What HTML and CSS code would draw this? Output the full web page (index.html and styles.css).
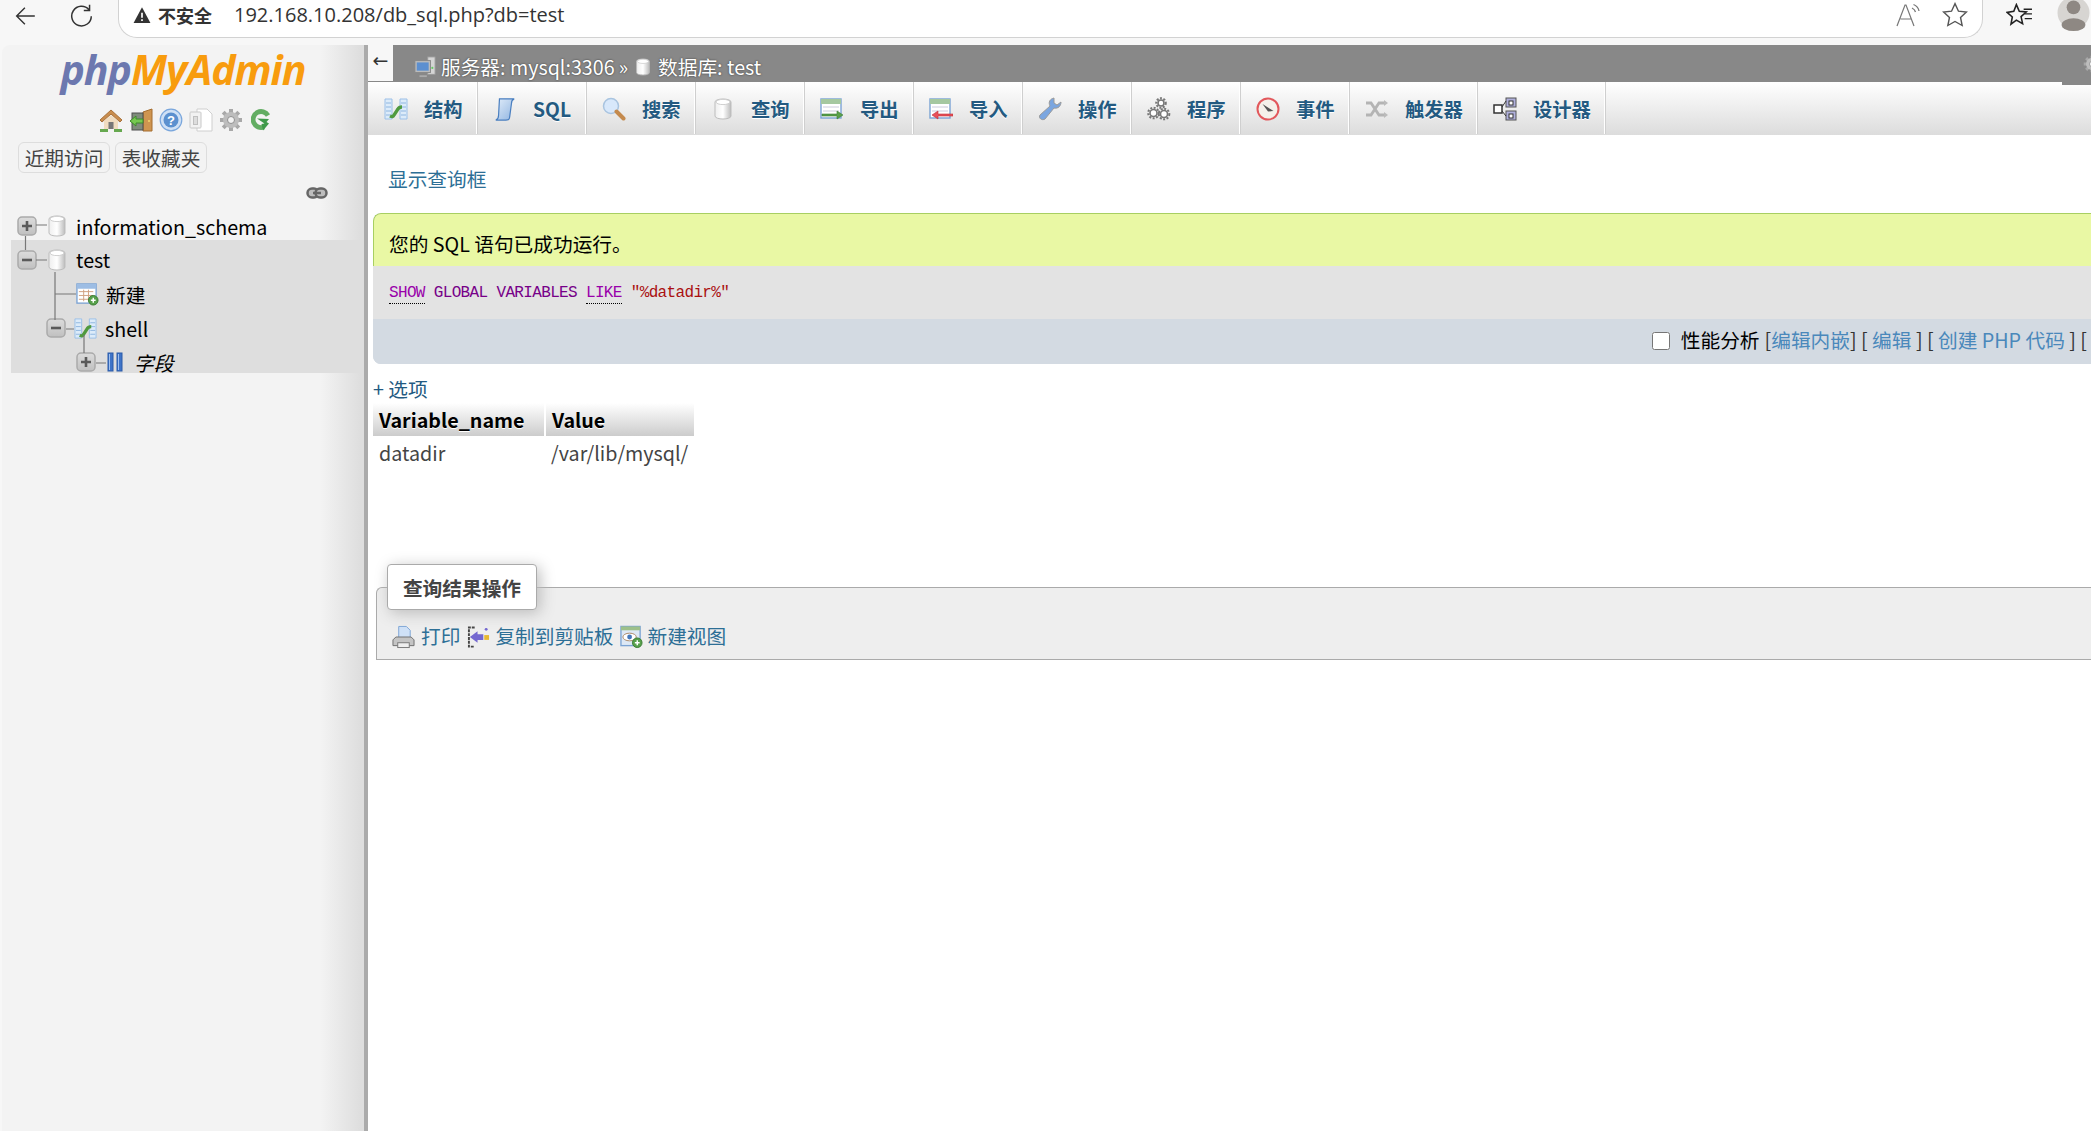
FILE: index.html
```html
<!DOCTYPE html>
<html lang="zh">
<head>
<meta charset="utf-8">
<title>phpMyAdmin</title>
<link rel="stylesheet" href="styles.css">
</head>
<body>
<svg class="defs" width="0" height="0" aria-hidden="true">
  <defs>
    <linearGradient id="dbg" x1="0" x2="1" y1="0" y2="0"><stop offset="0" stop-color="#eee"/><stop offset=".5" stop-color="#fff"/><stop offset="1" stop-color="#bcbcbc"/></linearGradient>
    <linearGradient id="blueg" x1="0" x2="1" y1="0" y2="1"><stop offset="0" stop-color="#e2edfa"/><stop offset="1" stop-color="#8fb4e0"/></linearGradient>
    <linearGradient id="boxg" x1="0" x2="0" y1="0" y2="1"><stop offset="0" stop-color="#dcdcdc"/><stop offset="1" stop-color="#c0c0c0"/></linearGradient>
    <symbol id="i-db" viewBox="0 0 20 24"><path d="M2 5c0-4 16-4 16 0v14c0 4-16 4-16 0z" fill="url(#dbg)" stroke="#bdbdbd"/><ellipse cx="10" cy="5" rx="7" ry="2.600" fill="#fff" stroke="#d0d0d0"/></symbol>
    <symbol id="i-plus" viewBox="0 0 20 20"><rect x="1" y="1" width="18" height="18" rx="4" fill="url(#boxg)" stroke="#aaa" stroke-width="1.500"/><path d="M5 10h10M10 5v10" stroke="#5a5a5a" stroke-width="2.600"/></symbol>
    <symbol id="i-minus" viewBox="0 0 20 20"><rect x="1" y="1" width="18" height="18" rx="4" fill="url(#boxg)" stroke="#aaa" stroke-width="1.500"/><path d="M5 10h10" stroke="#5a5a5a" stroke-width="2.600"/></symbol>
    <symbol id="i-table-new" viewBox="0 0 24 24"><rect x="1" y="1" width="20" height="20" fill="#fff" stroke="#7ba3d4" stroke-width="1.400"/><rect x="1" y="1" width="20" height="5" fill="#9dbde4"/><path d="M3 9h15M3 13h15M3 17h12M8 7v12M13 7v12" stroke="#d0a080" stroke-width="1"/><circle cx="18" cy="18" r="5" fill="#57a04b" stroke="#3b7c34"/><path d="M15.500 18h5M18 15.500v5" stroke="#fff" stroke-width="1.500"/></symbol>
    <symbol id="i-struct" viewBox="0 0 24 24"><path d="M1 2h7v20H1zM16 2h7v20h-7z" fill="#dcebf9" stroke="#9cc0e8"/><path d="M2 6h5M2 10h5M2 14h5M2 18h5M17 6h5M17 10h5M17 14h5M17 18h5" stroke="#8fb6e0"/><path d="M6 19c2 1 3 1 4-1l4-6c1-2 2-2 4-2" fill="none" stroke="#4f9a3f" stroke-width="3.400"/></symbol>
    <symbol id="i-cols" viewBox="0 0 16 20"><rect x="1" y="1" width="5" height="18" fill="#3f74c8" stroke="#2a5aa8"/><rect x="10" y="1" width="5" height="18" fill="#3f74c8" stroke="#2a5aa8"/><path d="M2.500 2v16M11.500 2v16" stroke="#9fc0f0"/></symbol>
    <symbol id="i-home" viewBox="0 0 24 24"><path d="M12 2L1 12l2 2 9-8 9 8 2-2z" fill="#c98d4e" stroke="#a8713a"/><path d="M5 13l7-6 7 6v8H5z" fill="#f0dcc0"/><rect x="9.500" y="14" width="5" height="7" fill="#777"/><path d="M1 22.500h8M15 22.500h8" stroke="#66a84f" stroke-width="2.800"/></symbol>
    <symbol id="i-exit" viewBox="0 0 24 24"><path d="M14 4l9-3v22h-9z" fill="#cf9550" stroke="#a56d2e"/><circle cx="20" cy="13" r="1" fill="#f5d76e"/><rect x="3" y="5" width="11" height="17" fill="#7f8c7c" stroke="#4f4f4f"/><path d="M1 13l6-5v3h7v4H7v3z" fill="#75c850" stroke="#3e8a2c"/></symbol>
    <symbol id="i-help" viewBox="0 0 24 24"><circle cx="12" cy="12" r="10.800" fill="#cfe0f5" stroke="#79a6dc" stroke-width="1.200"/><circle cx="12" cy="12" r="7.500" fill="#5b90cf"/><text x="12" y="16.500" text-anchor="middle" class="help-q">?</text></symbol>
    <symbol id="i-doc" viewBox="0 0 24 24"><path d="M8 1h10l5 5v17H8z" fill="#fff" stroke="#cfcfcf"/><path d="M1 5c0-1 1-1 1-1h9c1 0 1 1 1 1v14c0 1-1 1-1 1H2c-1 0-1-1-1-1z" fill="#f2f2f2" stroke="#c8c8c8"/><rect x="4.500" y="8.500" width="4" height="8" fill="#ddd" stroke="#c0c0c0"/></symbol>
    <symbol id="i-gear" viewBox="0 0 24 24"><g stroke="#a8a8a8" stroke-width="4"><path d="M12 1v22M1 12h22M4.200 4.200l15.600 15.600M19.800 4.200L4.200 19.800"/></g><circle cx="12" cy="12" r="8" fill="#bdbdbd"/><circle cx="12" cy="12" r="3.500" fill="#f2f2f2" stroke="#8f8f8f"/></symbol>
    <symbol id="i-reload" viewBox="0 0 20 24"><path d="M17 7.500A8 8 0 1 0 13 19" fill="none" stroke="#62ad62" stroke-width="4.800"/><path d="M6 10.500l12 .5-2.500 3 2.500 1.500-6 7-1.500-6.500 3-.5z" fill="#3f9a4a"/></symbol>
    <symbol id="i-chain" viewBox="0 0 22 12"><rect x="1.500" y="1.500" width="11" height="9" rx="4.500" fill="#bdbdbd" stroke="#666" stroke-width="2.500"/><rect x="9.500" y="1.500" width="11" height="9" rx="4.500" fill="#bdbdbd" stroke="#666" stroke-width="2.500"/><path d="M7 6h8" stroke="#666" stroke-width="2.500"/></symbol>
    <symbol id="i-server" viewBox="0 0 24 24"><rect x="15" y="1" width="8" height="19" fill="#d5d5d5" stroke="#999"/><rect x="1" y="5" width="17" height="13" fill="#bbb" stroke="#888"/><rect x="3" y="7" width="13" height="9" fill="#5c8fd0"/><path d="M6 22h8" stroke="#aaa" stroke-width="2"/><circle cx="20" cy="13" r="1.200" fill="#6c6"/></symbol>
    <symbol id="i-sql" viewBox="0 0 24 26"><path d="M6 2h16c-3 1-3 3-3 5l-2 15c0 2-2 3-4 3H2c3-1 3-3 3-5z" fill="url(#blueg)" stroke="#4a7fc0" stroke-width="1.300"/></symbol>
    <symbol id="i-search" viewBox="0 0 24 24"><circle cx="9" cy="9" r="7.500" fill="#d8e8fb" stroke="#a9c4e0" stroke-width="1.500"/><path d="M14.500 14.500l7 7" stroke="#c48a4e" stroke-width="4" stroke-linecap="round"/></symbol>
    <symbol id="i-export" viewBox="0 0 24 24"><rect x="1" y="2" width="20" height="19" fill="#fff" stroke="#7ba3d4" stroke-width="1.400"/><rect x="1" y="2" width="20" height="5" fill="#a5c8a0"/><path d="M3 10h16M3 14h16" stroke="#ccd"/><path d="M2 17h15v-3l6 4-6 4v-3H2z" fill="#5aa04a" stroke="#3b7c34" stroke-width=".6"/></symbol>
    <symbol id="i-import" viewBox="0 0 24 24"><rect x="1" y="2" width="20" height="19" fill="#fff" stroke="#7ba3d4" stroke-width="1.400"/><rect x="1" y="2" width="20" height="5" fill="#a5c8a0"/><path d="M3 10h16M3 14h16" stroke="#ccd"/><path d="M24 17H9v-3l-6 4 6 4v-3h15z" fill="#e8505a" stroke="#c03038" stroke-width=".6"/></symbol>
    <symbol id="i-wrench" viewBox="0 0 24 24"><path d="M16 1c-4 1-6 4-4 8L2 18c-2 3 2 6 5 4l9-11c4 1 7-2 7-6l-4 3-3-2z" fill="#7ba6e0" stroke="#9a9a9a"/></symbol>
    <symbol id="i-gears" viewBox="0 0 24 24"><g fill="#fff" stroke="#777" stroke-width="1.600"><circle cx="14" cy="6" r="3"/><circle cx="6.500" cy="16" r="3.500"/><circle cx="17" cy="17" r="3.500"/></g><g fill="none" stroke="#777" stroke-dasharray="2 1.500" stroke-width="2"><circle cx="14" cy="6" r="4.800"/><circle cx="6.500" cy="16" r="5.300"/><circle cx="17" cy="17" r="5.300"/></g></symbol>
    <symbol id="i-clock" viewBox="0 0 24 24"><circle cx="12" cy="12" r="10.500" fill="#f5f1ea" stroke="#e2585c" stroke-width="2"/><path d="M6.500 7l7 4.500 4 2.500-5.500.5z" fill="#555"/></symbol>
    <symbol id="i-trig" viewBox="0 0 24 18"><path d="M1 3h5l8 12h6M1 15h5l8-12h6" fill="none" stroke="#b4b4b4" stroke-width="2.800"/><path d="M19 0l4 3-4 3zM19 12l4 3-4 3z" fill="#bbb"/></symbol>
    <symbol id="i-design" viewBox="0 0 24 24"><rect x="13" y="1" width="10" height="9" fill="#b0b0dc" stroke="#555"/><rect x="13" y="14" width="10" height="9" fill="#b0b0dc" stroke="#555"/><rect x="1" y="8" width="8" height="8" fill="#fff" stroke="#333" stroke-width="1.500"/><rect x="16" y="4" width="4" height="4" fill="#fff" stroke="#333"/><rect x="16" y="17" width="4" height="4" fill="#fff" stroke="#333"/><path d="M9 10l4-6M9 14l4 5" stroke="#333"/></symbol>
    <symbol id="i-print" viewBox="0 0 24 24"><path d="M7 1h8l4 4v8H7z" fill="#cfe1f7" stroke="#7da5d6"/><path d="M4 12h16l3 3v6H1v-6z" fill="#c4c4c4" stroke="#6f6f6f"/><rect x="6" y="18" width="12" height="5" fill="#eee" stroke="#777"/></symbol>
    <symbol id="i-copy" viewBox="0 0 24 24"><path d="M8 2H2v20h6" fill="none" stroke="#444" stroke-width="2" stroke-dasharray="3 1"/><path d="M3 12l8-6v3h6v6h-6v3z" fill="#7468d0"/><rect x="18" y="10" width="5" height="5" fill="#e8b830"/><circle cx="20" cy="4" r="1.500" fill="#7468d0"/></symbol>
    <symbol id="i-view" viewBox="0 0 24 24"><rect x="1" y="1" width="20" height="20" fill="#dde8f5" stroke="#7ba3d4" stroke-width="1.400"/><rect x="1" y="1" width="20" height="4" fill="#9dc08a"/><ellipse cx="10" cy="12" rx="7" ry="4" fill="#fff" stroke="#a86"/><circle cx="10" cy="12" r="2.500" fill="#4477bb"/><circle cx="18" cy="18" r="5" fill="#57a04b" stroke="#3b7c34"/><path d="M15.500 18h5M18 15.500v5" stroke="#fff" stroke-width="1.500"/></symbol>
  </defs>
</svg>

<header class="browser">
  <svg class="b-icon b-back" viewBox="0 0 20 20"><path d="M18 10H2M9 2.500L1.500 10 9 17.500" fill="none" stroke="#333" stroke-width="1.300"/></svg>
  <svg class="b-icon b-reload" viewBox="0 0 20 20"><path d="M16.500 5.500A8.500 8.500 0 1 0 18.500 11M17 1v5h-5" fill="none" stroke="#333" stroke-width="1.300"/></svg>
  <div class="address">
    <svg class="warn" viewBox="0 0 16 16"><path d="M8 1L15.500 15H.5z" fill="#333"/><path d="M8 6v4.500M8 11.800v1.500" stroke="#fff" stroke-width="1.500"/></svg>
    <span class="insecure">不安全</span>
    <span class="url">192.168.10.208/db_sql.php?db=test</span>
    <span class="addr-spacer"></span>
    <svg class="b-icon b-read" viewBox="0 0 26 26"><path d="M1 24L9 3h1l8 21M4.500 17h11" fill="none" stroke="#777" stroke-width="1.200"/><path d="M16 6c2 1 3 2 3.500 4M17.500 2.500c3 1.200 5 3.500 5.500 6.500" fill="none" stroke="#777" stroke-width="1.300"/></svg>
    <svg class="b-icon b-star" viewBox="0 0 24 24"><path d="M12 1.500l3.200 7 7.300.8-5.400 5 1.500 7.400L12 18l-6.600 3.700 1.500-7.400-5.400-5 7.300-.8z" fill="none" stroke="#555" stroke-width="1.300"/></svg>
  </div>
  <svg class="b-icon b-favs" viewBox="0 0 26 24"><path d="M10 1.500l2.800 6.500 6.700.6-5 4.500 1.500 6.800-6-3.500-5.200 4 1.300-7L1 9l6.500-1z" fill="none" stroke="#222" stroke-width="1.500"/><path d="M17 6h8M18 10.500h7M18 15h7" stroke="#222" stroke-width="1.300"/></svg>
  <svg class="b-avatar" viewBox="0 0 35 35"><circle cx="17.500" cy="14" r="17.500" fill="#d7d5d2"/><circle cx="17.500" cy="8" r="7.500" fill="#8e8883"/><ellipse cx="17.500" cy="27" rx="13" ry="7" fill="#8e8883"/></svg>
</header>

<div class="app">
  <aside class="sidebar">
    <div class="logo"><span class="logo-php">php</span><span class="logo-my">MyAdmin</span></div>
    <div class="quick">
      <svg class="q-icon"><use href="#i-home"/></svg>
      <svg class="q-icon"><use href="#i-exit"/></svg>
      <svg class="q-icon"><use href="#i-help"/></svg>
      <svg class="q-icon"><use href="#i-doc"/></svg>
      <svg class="q-icon"><use href="#i-gear"/></svg>
      <svg class="q-icon q-reload"><use href="#i-reload"/></svg>
    </div>
    <div class="side-btns">
      <a class="side-btn">近期访问</a>
      <a class="side-btn">表收藏夹</a>
    </div>
    <div class="chain-row"><svg class="chain"><use href="#i-chain"/></svg></div>
    <div class="tree">
      <div class="row row-first">
        <svg class="box"><use href="#i-plus"/></svg>
        <svg class="db"><use href="#i-db"/></svg>
        <span class="node">information_schema</span>
      </div>
      <div class="band">
        <div class="row row-test">
          <svg class="box"><use href="#i-minus"/></svg>
          <svg class="db"><use href="#i-db"/></svg>
          <span class="node">test</span>
        </div>
        <div class="row row-new">
          <svg class="tbl"><use href="#i-table-new"/></svg>
          <span class="node">新建</span>
        </div>
        <div class="row row-shell">
          <svg class="box"><use href="#i-minus"/></svg>
          <svg class="tbl"><use href="#i-struct"/></svg>
          <span class="node">shell</span>
        </div>
        <div class="row row-cols">
          <svg class="box"><use href="#i-plus"/></svg>
          <svg class="cols"><use href="#i-cols"/></svg>
          <span class="node node-i">字段</span>
        </div>
      </div>
      <svg class="tree-lines" width="120" height="170" viewBox="0 0 120 170">
        <path d="M23.500 27v14M34 16h11M34 51h11M53 63v48M53 85h21M64 120h8M82 126v18M94 154h10" fill="none" stroke="#777" stroke-width="1.200"/>
      </svg>
    </div>
  </aside>

  <main class="main">
    <div class="crumbs">
      <span class="back-box">←</span>
      <svg class="crumb-ico"><use href="#i-server"/></svg>
      <span class="crumb">服务器: mysql:3306</span>
      <span class="crumb sep">»</span>
      <svg class="crumb-db"><use href="#i-db"/></svg>
      <span class="crumb">数据库: test</span>
      <span class="crumb-spacer"></span>
      <svg class="crumb-gear"><use href="#i-gear"/></svg>
    </div>
    <nav class="tabs">
      <a class="tab"><svg class="t-ico"><use href="#i-struct"/></svg>结构</a>
      <a class="tab"><svg class="t-ico"><use href="#i-sql"/></svg>SQL</a>
      <a class="tab"><svg class="t-ico"><use href="#i-search"/></svg>搜索</a>
      <a class="tab"><svg class="t-ico"><use href="#i-db"/></svg>查询</a>
      <a class="tab"><svg class="t-ico"><use href="#i-export"/></svg>导出</a>
      <a class="tab"><svg class="t-ico"><use href="#i-import"/></svg>导入</a>
      <a class="tab"><svg class="t-ico"><use href="#i-wrench"/></svg>操作</a>
      <a class="tab"><svg class="t-ico"><use href="#i-gears"/></svg>程序</a>
      <a class="tab"><svg class="t-ico"><use href="#i-clock"/></svg>事件</a>
      <a class="tab tab-wide"><svg class="t-ico"><use href="#i-trig"/></svg>触发器</a>
      <a class="tab tab-wide"><svg class="t-ico"><use href="#i-design"/></svg>设计器</a>
    </nav>
    <div class="content">
      <a class="show-q">显示查询框</a>
      <div class="result">
        <div class="notice">您的 SQL 语句已成功运行。</div>
        <div class="sql"><span class="kw dot">SHOW</span> <span class="kw2">GLOBAL</span> <span class="kw2">VARIABLES</span> <span class="kw dot">LIKE</span> <span class="str">"%datadir%"</span></div>
        <div class="tools">
          <input class="tools-check" type="checkbox">
          <span class="tools-label">性能分析</span>
          <span class="tools-links">[<a>编辑内嵌</a>] [ <a>编辑</a> ] [ <a>创建 PHP 代码</a> ] [</span>
        </div>
      </div>
      <a class="options">+ 选项</a>
      <table class="data">
        <thead><tr><th>Variable_name</th><th>Value</th></tr></thead>
        <tbody><tr><td>datadir</td><td>/var/lib/mysql/</td></tr></tbody>
      </table>
      <section class="ops">
        <div class="legend">查询结果操作</div>
        <div class="ops-row">
          <svg class="op-ico"><use href="#i-print"/></svg><a class="op op-print">打印</a>
          <svg class="op-ico"><use href="#i-copy"/></svg><a class="op op-copy">复制到剪贴板</a>
          <svg class="op-ico"><use href="#i-view"/></svg><a class="op">新建视图</a>
        </div>
      </section>
    </div>
  </main>
</div>
</body>
</html>
```
FILE: styles.css
```css
* { box-sizing: border-box; }
html, body { margin: 0; padding: 0; }
body {
  width: 2091px;
  height: 1131px;
  overflow: hidden;
  background: #fff;
  font-family: "Noto Sans CJK SC", "Noto Sans", sans-serif;
  font-size: 19.7px;
  color: #444;
  display: flex;
  flex-direction: column;
}
.defs { display: block; width: 0; height: 0; overflow: hidden; }
.help-q { font: bold 13px "Liberation Sans", sans-serif; fill: #fff; }

/* browser chrome */
.browser {
  height: 45px;
  flex: none;
  background: #f7f7f7;
  display: flex;
  align-items: flex-start;
}
.b-icon { display: block; flex: none; }
.b-back { width: 22px; height: 22px; margin: 5px 0 0 15px; }
.b-reload { width: 23px; height: 24px; margin: 3px 0 0 33px; }
.address {
  width: 1865px;
  height: 38px;
  margin: 0 0 0 25px;
  padding: 0 0 0 14px;
  background: #fff;
  border: 1px solid #d2d2d2;
  border-top: 0;
  border-radius: 0 0 19px 19px;
  display: flex;
  align-items: flex-start;
}
.warn { width: 18px; height: 18px; margin-top: 6px; flex: none; }
.insecure { margin-left: 7px; font-size: 18px; font-weight: 700; color: #333; line-height: 30px; }
.url { margin-left: 22px; font-family: "Open Sans", sans-serif; font-size: 20px; color: #333; line-height: 30px; }
.addr-spacer { flex: 1; }
.b-read { width: 26px; height: 26px; margin: 2px 20px 0 0; }
.b-star { width: 26px; height: 26px; margin: 2px 14px 0 0; }
.b-favs { width: 27px; height: 25px; margin: 3px 0 0 23px; }
.b-avatar { width: 35px; height: 32px; margin-left: 23px; flex: none; display: block; }

/* layout */
.app { flex: 1; display: flex; min-height: 0; background: #f7f7f7; }
.sidebar {
  width: 366px;
  flex: none;
  margin-left: 2px;
  background: linear-gradient(to right, #f3f3f3 0, #f3f3f3 88%, #dedede 99%);
  border-right: 4px solid #ababab;
  border-radius: 8px 0 0 0;
  display: flex;
  flex-direction: column;
}
.logo {
  height: 52px;
  text-align: center;
  font-family: "Open Sans", sans-serif;
  font-size: 41px;
  font-weight: 700;
  font-style: italic;
  line-height: 48px;
  letter-spacing: -1px;
  white-space: nowrap;
}
.logo-php { color: #6c78af; }
.logo-my { color: #f89c0e; }
.quick {
  height: 45px;
  padding: 0 0 0 97px;
  display: flex;
  align-items: center;
  gap: 6px;
}
.q-icon { width: 24px; height: 24px; display: block; flex: none; }
.q-reload { width: 20px; margin-left: 2px; }
.side-btns { padding: 0 0 0 16px; display: flex; gap: 5px; }
.side-btn {
  width: 92px;
  height: 31px;
  border: 1px solid #ddd;
  border-radius: 6px;
  text-align: center;
  line-height: 29px;
  color: #444;
  font-size: 19.7px;
  white-space: nowrap;
}
.chain-row { height: 36px; padding: 14px 0 0 304px; }
.chain { width: 22px; height: 12px; display: block; }

.tree { position: relative; color: #000; }
.row { height: 34px; display: flex; align-items: center; padding-left: 15px; }
.row-first { height: 31px; padding-top: 3px; }
.box { width: 20px; height: 20px; flex: none; display: block; }
.db { width: 20px; height: 24px; flex: none; display: block; margin-left: 10px; }
.node { margin-left: 9px; white-space: nowrap; }
.band {
  margin-left: 9px;
  width: 352px;
  height: 133px;
  padding-top: 2px;
  overflow: hidden;
  background: #dedede;
}
.band .row { padding-left: 6px; }
.band .row-test { height: 35px; }
.band .row-new { padding-left: 65px; }
.band .row-new .node { margin-left: 7px; }
.tbl { width: 23px; height: 23px; flex: none; display: block; }
.band .row-shell { padding-left: 35px; }
.band .row-shell .tbl { margin-left: 8px; }
.band .row-shell .node { margin-left: 8px; }
.band .row-cols { padding-left: 65px; }
.cols { width: 16px; height: 20px; flex: none; display: block; margin-left: 11px; }
.node-i { font-style: italic; margin-left: 11px; }
.tree-lines { position: absolute; left: 0; top: 0; pointer-events: none; }

/* main */
.main { width: 1723px; flex: none; display: flex; flex-direction: column; background: #fff; overflow: hidden; }
.crumbs {
  height: 37px;
  flex: none;
  background: #888;
  display: flex;
  align-items: center;
  color: #fff;
}
.back-box {
  width: 25px;
  height: 36px;
  background: #f7f7f7;
  color: #333;
  font-family: "DejaVu Sans", sans-serif;
  font-size: 19px;
  line-height: 30px;
  text-align: center;
  flex: none;
  align-self: flex-start;
}
.crumb-ico { width: 22px; height: 22px; margin: 7px 5px 0 21px; display: block; flex: none; }
.crumb-db { width: 16px; height: 20px; margin: 7px 7px 0 7px; display: block; flex: none; }
.crumb {
  white-space: nowrap;
  padding-top: 5px;
  text-shadow: 0 0 2px #333;
}
.sep { margin-left: 4px; }
.crumb-spacer { flex: 1; }
.crumb-gear { width: 18px; height: 18px; margin: 0 -10px 0 0; display: block; flex: none; }

.tabs {
  position: relative;
  height: 53px;
  flex: none;
  display: flex;
  background: linear-gradient(#fff, #dcdcdc);
}
.tabs::after {
  content: "";
  position: absolute;
  right: 0;
  top: 0;
  width: 29px;
  height: 3px;
  background: #888;
}
.tab {
  width: 109px;
  height: 52px;
  display: flex;
  align-items: center;
  flex: none;
  color: #235a81;
  font-weight: 700;
  font-size: 19.3px;
  text-shadow: 0 1px 0 #fff;
  border-right: 1px solid #fff;
  box-shadow: 1px 0 0 #cfcfcf;
  padding: 1px 0 0 16px;
  white-space: nowrap;
}
.tab-wide { width: 128px; }
.t-ico { width: 24px; height: 24px; margin-right: 16px; display: block; flex: none; }
.tab:nth-child(4) .t-ico { width: 20px; margin: 0 18px 0 2px; }
.tab:nth-child(10) .t-ico { height: 18px; }

.content { padding: 0 0 0 5px; flex: 1; }
.show-q { display: block; height: 78px; padding: 29px 0 0 15px; line-height: 30px; color: #2d6f96; }
.result { width: 1800px; border-radius: 8px 0 0 8px; overflow: hidden; background: #d3dae2; }
.notice {
  height: 53px;
  padding: 8px 15px 0;
  background: #e9f8a4;
  border-top: 1px solid #a8cf62;
  border-left: 1px solid #a8cf62;
  border-radius: 8px 0 0 0;
  line-height: 44px;
  color: #000;
  white-space: nowrap;
}
.sql {
  height: 53px;
  padding: 0 16px;
  background: #e3e3e3;
  font-family: "Liberation Mono", monospace;
  font-size: 16px;
  letter-spacing: -.65px;
  line-height: 54px;
  white-space: pre;
  color: #707;
}
.kw { color: #90a; }
.kw2 { color: #708; }
.dot { border-bottom: 1px dotted #000; padding-bottom: 1px; }
.str { color: #a11; }
.tools {
  width: 1718px;
  height: 45px;
  background: #d3dae2;
  display: flex;
  align-items: center;
  justify-content: flex-end;
  padding: 0 4px 5px 0;
  white-space: nowrap;
  color: #000;
}
.tools-check { width: 18px; height: 18px; margin: 3px 11px 0 0; flex: none; }
.tools-label { margin-right: 5px; }
.tools-links { color: #333; }
.tools-links a { color: #4a88bb; }
.options { display: block; height: 39px; line-height: 50px; color: #235a81; }
.data { border-collapse: collapse; width: 321px; table-layout: fixed; }
.data th {
  height: 33px;
  padding: 0 0 0 6px;
  text-align: left;
  color: #000;
  font-weight: 700;
  background: linear-gradient(#fff, #ccc);
  text-shadow: 0 1px 0 #fff;
  line-height: 33px;
}
.data th:first-child { width: 172px; border-right: 2px solid #fff; }
.data td { height: 34px; padding: 0 0 0 6px; line-height: 34px; white-space: nowrap; color: #444; }
.ops {
  position: relative;
  margin: 117px 0 0 3px;
  width: 1800px;
  height: 73px;
  background: #eee;
  border: 1px solid #aaa;
  border-right: 0;
  border-radius: 6px 0 0 0;
}
.legend {
  position: absolute;
  left: 10px;
  top: -24px;
  width: 150px;
  height: 46px;
  background: #fff;
  border: 1px solid #aaa;
  border-radius: 4px;
  box-shadow: 3px 3px 15px #bbb;
  font-weight: 700;
  text-align: center;
  line-height: 46px;
  color: #444;
}
.ops-row { display: flex; align-items: center; height: 70px; padding: 24px 0 0 15px; }
.op-ico { width: 23px; height: 24px; margin-top: 3px; display: block; flex: none; }
.op { color: #2d6f96; margin: 0 7px 0 5px; white-space: nowrap; }
.op-print { margin-left: 6px; }
.op-copy { margin-right: 6px; }
```
